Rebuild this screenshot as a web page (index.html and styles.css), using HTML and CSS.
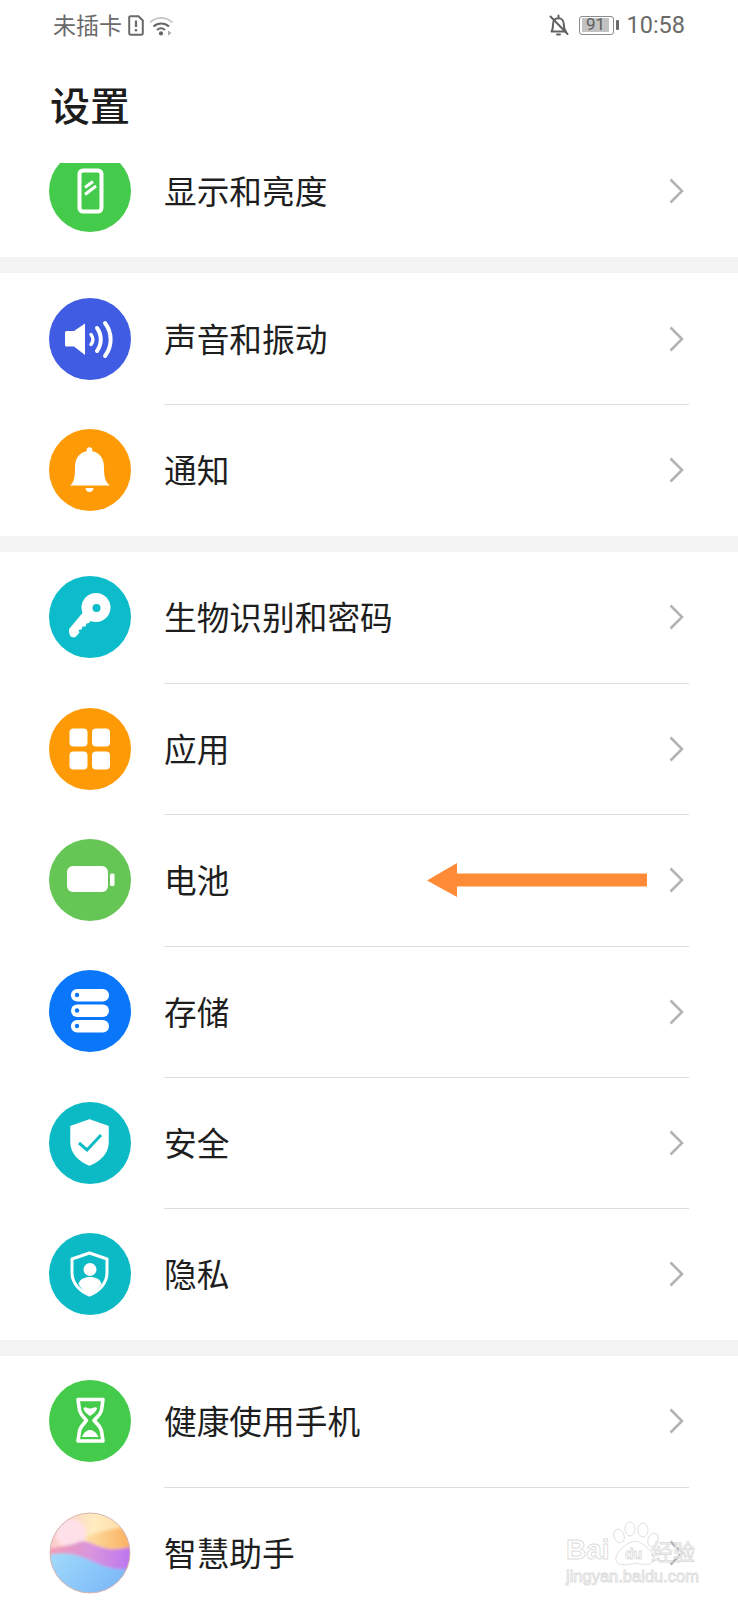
FILE: index.html
```html
<!DOCTYPE html>
<html lang="zh-CN">
<head>
<meta charset="utf-8">
<title>设置</title>
<link rel="stylesheet" href="styles.css">
</head>
<body>
<div class="screen">
  <header class="status">
    <div class="status-group">
      <span class="carrier">未插卡</span>
      <svg class="sim" viewBox="0 0 16 21"><path d="M2.5 1.2H10.5L14.8 5.5V18a1.8 1.8 0 0 1-1.8 1.8H3A1.8 1.8 0 0 1 1.2 18V2.5A1.3 1.3 0 0 1 2.5 1.2Z" fill="none" stroke="#6a6a6a" stroke-width="2"/><path d="M8 5.5V12" stroke="#6a6a6a" stroke-width="2.2"/><circle cx="8" cy="15.2" r="1.3" fill="#6a6a6a"/></svg>
      <svg class="wifi" viewBox="0 0 25 21"><path d="M1 7.5C7 1.5 17 1.5 23.5 7.5" fill="none" stroke="#c9c9c9" stroke-width="1.8"/><path d="M4.5 11.5C9 7.5 15.5 7.5 20 11.5" fill="none" stroke="#666" stroke-width="2"/><path d="M8 15C10.5 12.8 13.5 12.8 16 15" fill="none" stroke="#666" stroke-width="2"/><circle cx="12" cy="18.4" r="2.1" fill="#666"/><path d="M19 15.5l3.5 2.5-3.5 2.5Z" fill="#aaa"/></svg>
    </div>
    <div class="status-group">
      <svg class="bell-off" viewBox="0 0 21 22"><path d="M3.5 17.5C5 15.5 5 13.5 5 10.5C5 6.5 7.2 4.2 10.5 4.2C13.6 4.2 15.8 6.5 15.8 10.2C15.8 13.5 16 15.5 17.8 17.5Z" fill="none" stroke="#626262" stroke-width="2" stroke-linejoin="round"/><path d="M10.5 1.5V4M9 20.5H12M2.5 2.5L19.5 20" stroke="#626262" stroke-width="2" stroke-linecap="round"/></svg>
      <div class="battery"><span class="battery-level">91</span></div>
      <span class="battery-tip"></span>
      <span class="time">10:58</span>
    </div>
  </header>

  <h1 class="title">设置</h1>

  <main class="list">
    <section class="group group-first">
      <div class="row">
        <span class="badge green">
          <svg viewBox="0 0 82 82"><rect x="30.500" y="20.500" width="22" height="41" rx="3.500" fill="none" stroke="#fff" stroke-width="4"/><path d="M36 37.500L44 31.500M36 44.500L47 36" stroke="#fff" stroke-width="3" fill="none"/></svg>
        </span>
        <div class="row-body"><span class="label">显示和亮度</span><svg class="chevron" viewBox="0 0 15 26"><path d="M1.5 1.5L13 13L1.5 24.5" /></svg></div>
      </div>
    </section>

    <section class="group">
      <div class="row">
        <span class="badge indigo">
          <svg viewBox="0 0 82 82"><path d="M17.500 33H25L36 25.500V57L25 48.500H17.500A1.500 1.500 0 0 1 16 47V34.500A1.500 1.500 0 0 1 17.500 33Z" fill="#fff"/><path d="M42 36.500C44.500 39.500 44.500 43.500 42 46.500" stroke="#fff" stroke-width="3.500" fill="none" stroke-linecap="round"/><path d="M48 30C53 37 53 46 48 53" stroke="#fff" stroke-width="4" fill="none" stroke-linecap="round"/><path d="M56 25C63.500 35 63.500 48 56 58" stroke="#fff" stroke-width="4" fill="none" stroke-linecap="round"/></svg>
        </span>
        <div class="row-body"><span class="label">声音和振动</span><svg class="chevron" viewBox="0 0 15 26"><path d="M1.5 1.5L13 13L1.5 24.5" /></svg></div>
      </div>
      <div class="row">
        <span class="badge orange">
          <svg viewBox="0 0 82 82"><circle cx="40.500" cy="21" r="2.800" fill="#fff"/><path d="M21 56.500C25 53 26 49 26 38C26 28 32 22 40.500 22C49 22 55 28 55 38C55 49 56.500 53 61 56.500Z" fill="#fff"/><path d="M36.500 59H44.500C44 62 42.500 63 40.500 63C38.500 63 37 62 36.500 59Z" fill="#fff"/></svg>
        </span>
        <div class="row-body"><span class="label">通知</span><svg class="chevron" viewBox="0 0 15 26"><path d="M1.5 1.5L13 13L1.5 24.5" /></svg></div>
      </div>
    </section>

    <section class="group">
      <div class="row">
        <span class="badge teal">
          <svg viewBox="0 0 82 82"><circle cx="47" cy="31.500" r="14.500" fill="#fff"/><path d="M36 34L20.500 52.500C19.500 54 20 57.500 21 59.500C22.500 61.500 25.500 62 27 60.500L30.500 56.500L29.500 54L32.500 53.500L33.500 50.500L36.500 50.500L37.500 47.500L40 47L44 42Z" fill="#fff"/><circle cx="47.500" cy="32" r="4" fill="#0cbccb"/></svg>
        </span>
        <div class="row-body"><span class="label">生物识别和密码</span><svg class="chevron" viewBox="0 0 15 26"><path d="M1.5 1.5L13 13L1.5 24.5" /></svg></div>
      </div>
      <div class="row">
        <span class="badge orange">
          <svg viewBox="0 0 82 82"><rect x="20.500" y="20.500" width="18" height="18" rx="4" fill="#fff"/><rect x="43" y="20.500" width="18" height="18" rx="4" fill="#fff"/><rect x="20.500" y="43.500" width="18" height="18" rx="4" fill="#fff"/><rect x="43" y="43.500" width="18" height="18" rx="4" fill="#fff"/></svg>
        </span>
        <div class="row-body"><span class="label">应用</span><svg class="chevron" viewBox="0 0 15 26"><path d="M1.5 1.5L13 13L1.5 24.5" /></svg></div>
      </div>
      <div class="row">
        <span class="badge leaf">
          <svg viewBox="0 0 82 82"><rect x="18" y="27" width="41" height="26" rx="6" fill="#fff"/><rect x="61" y="34.500" width="4.500" height="12.500" rx="1.500" fill="#fff"/></svg>
        </span>
        <div class="row-body"><span class="label">电池</span><svg class="chevron" viewBox="0 0 15 26"><path d="M1.5 1.5L13 13L1.5 24.5" /></svg></div>
      </div>
      <div class="row">
        <span class="badge blue">
          <svg viewBox="0 0 82 82"><rect x="22" y="19" width="38" height="12.500" rx="6.200" fill="#fff"/><rect x="22" y="34.500" width="38" height="12.500" rx="6.200" fill="#fff"/><rect x="22" y="50" width="38" height="12.500" rx="6.200" fill="#fff"/><circle cx="28" cy="25" r="2.200" fill="#0a77fb"/><circle cx="28" cy="40.500" r="2.200" fill="#0a77fb"/><circle cx="28" cy="56" r="2.200" fill="#0a77fb"/></svg>
        </span>
        <div class="row-body"><span class="label">存储</span><svg class="chevron" viewBox="0 0 15 26"><path d="M1.5 1.5L13 13L1.5 24.5" /></svg></div>
      </div>
      <div class="row">
        <span class="badge cyan">
          <svg viewBox="0 0 82 82"><path d="M40.500 18L59 24.500V40C59 51 51 59 40.500 63C30 59 22 51 22 40V24.500Z" fill="#fff" stroke="#fff" stroke-width="1.500" stroke-linejoin="round"/><path d="M30 41L38 48L52 33" fill="none" stroke="#0bbac4" stroke-width="3"/></svg>
        </span>
        <div class="row-body"><span class="label">安全</span><svg class="chevron" viewBox="0 0 15 26"><path d="M1.5 1.5L13 13L1.5 24.5" /></svg></div>
      </div>
      <div class="row">
        <span class="badge cyan">
          <svg viewBox="0 0 82 82"><path d="M40.500 20L58 26V40C58 50 50.500 58 40.500 62C30.500 58 23 50 23 40V26Z" fill="none" stroke="#fff" stroke-width="3" stroke-linejoin="round"/><circle cx="41" cy="36.500" r="6.500" fill="#fff"/><path d="M29.500 51C31 46 35 44 41 44C47 44 51 46 52.500 51C49 56 45 59.500 40.500 61.500C36 59.500 32.500 56 29.500 51Z" fill="#fff"/></svg>
        </span>
        <div class="row-body"><span class="label">隐私</span><svg class="chevron" viewBox="0 0 15 26"><path d="M1.5 1.5L13 13L1.5 24.5" /></svg></div>
      </div>
    </section>

    <section class="group">
      <div class="row">
        <span class="badge green">
          <svg viewBox="0 0 82 82"><path d="M29 19.500H54L52.500 30C51.500 35 47 38 45 40.500C47 43 51.500 46 52.500 51L54 61H29L30.500 51C31.500 46 35.500 43 37.500 40.500C35.500 38 31.500 35 30.500 30Z" fill="none" stroke="#fff" stroke-width="3.600" stroke-linejoin="round"/><path d="M34.500 28C37 26 39 29 41 28.500C43 29 46 26 48 28C48 31 44 34 41 36C38 34 34.500 31 34.500 28Z" fill="#fff"/><path d="M33 57C35 52 38 50 41 50C44 50 47 52 49.500 57Z" fill="#fff"/></svg>
        </span>
        <div class="row-body"><span class="label">健康使用手机</span><svg class="chevron" viewBox="0 0 15 26"><path d="M1.5 1.5L13 13L1.5 24.5" /></svg></div>
      </div>
      <div class="row">
        <span class="badge orb">
          <svg viewBox="0 0 82 82">
            <defs>
              <clipPath id="orb-clip"><circle cx="41" cy="41" r="40"/></clipPath>
              <linearGradient id="orb-base" x1="0" y1="0" x2="1" y2="0.2"><stop offset="0" stop-color="#fbc4d0"/><stop offset="0.55" stop-color="#ffecc0"/><stop offset="1" stop-color="#fdd9a0"/></linearGradient>
              <linearGradient id="orb-mid" x1="0" y1="0" x2="1" y2="0"><stop offset="0" stop-color="#f59cae"/><stop offset="0.5" stop-color="#d894de"/><stop offset="1" stop-color="#b76ff2"/></linearGradient>
              <linearGradient id="orb-low" x1="0" y1="0" x2="1" y2="0.5"><stop offset="0" stop-color="#a3dcfa"/><stop offset="1" stop-color="#77b5f8"/></linearGradient>
              <linearGradient id="orb-sun" x1="0" y1="0" x2="1" y2="0"><stop offset="0" stop-color="#fde0a8"/><stop offset="1" stop-color="#fba851"/></linearGradient>
              <filter id="orb-soft"><feGaussianBlur stdDeviation="1.500"/></filter>
            </defs>
            <g clip-path="url(#orb-clip)">
              <rect width="82" height="82" fill="url(#orb-base)"/>
              <g filter="url(#orb-soft)">
                <path d="M35 25C45 22 70 14 90 14V36C75 40 45 40 35 25Z" fill="url(#orb-sun)"/>
                <circle cx="22" cy="22" r="15" fill="#fde0e8"/>
                <path d="M-4 38C10 34 22 34 30 30C40 27 45 35 60 37C70 38 80 36 90 32V60H-4Z" fill="url(#orb-mid)"/>
                <path d="M-4 44C15 38 30 43 45 50C60 57 75 60 90 54V90H-4Z" fill="url(#orb-low)"/>
              </g>
            </g>
            <circle cx="41" cy="41" r="40" fill="none" stroke="#d8b4b0" stroke-width="1"/>
          </svg>
        </span>
        <div class="row-body"><span class="label">智慧助手</span><svg class="chevron" viewBox="0 0 15 26"><path d="M1.5 1.5L13 13L1.5 24.500" /></svg></div>
      </div>
    </section>
  </main>

  <svg class="arrow" viewBox="0 0 222 36"><path d="M0 17.500L30 0V10.500H220V23.500H30V34Z" fill="#ff8b36"/></svg>

  <svg class="watermark" viewBox="0 0 150 80">
    <g fill="#fff" stroke="#dcdcdc" stroke-width="0.900">
      <text class="wm-brand" x="2" y="44">Bai</text>
      <ellipse cx="55" cy="21" rx="5" ry="7" transform="rotate(-20 55 21)"/>
      <ellipse cx="66" cy="14" rx="5" ry="7"/>
      <ellipse cx="79" cy="15" rx="5" ry="7"/>
      <ellipse cx="89" cy="25" rx="5" ry="7" transform="rotate(20 89 25)"/>
      <path d="M72 26C80 28 90 38 90 43C90 51 80 50 72 48C62 51 50 51 52 42C54 35 63 27 72 26Z"/>
      <text class="wm-du" x="61" y="44">du</text>
      <text class="wm-jy" x="87" y="45">经验</text>
      <text class="wm-url" x="2" y="67">jingyan.baidu.com</text>
    </g>
  </svg>
</div>
</body>
</html>
```
FILE: styles.css
```css
* { box-sizing: border-box; }
html, body { margin: 0; padding: 0; background: #fff; }
body { font-family: "Noto Sans CJK SC", "Noto Sans", sans-serif; }

.screen {
  position: relative;
  width: 738px;
  height: 1600px;
  overflow: hidden;
  background: #fff;
  display: flex;
  flex-direction: column;
}

.status {
  height: 50px;
  flex: none;
  display: flex;
  justify-content: space-between;
  align-items: center;
  padding: 0 53px 0 53px;
  color: #6a6a6a;
}
.status-group { display: flex; align-items: center; }
.carrier { font-size: 23px; line-height: 50px; margin-top: -3px; }
.sim { width: 16px; height: 21px; margin-left: 6px; }
.wifi { width: 25px; height: 21px; margin-left: 5px; }
.bell-off { width: 21px; height: 22px; margin-right: 10px; }
.battery {
  width: 35px;
  height: 19px;
  border: 1.5px solid #8a8a8a;
  border-radius: 3px;
  padding: 1.5px;
  display: flex;
}
.battery-level {
  flex: 1;
  margin-right: 3px;
  background: #c2c2c2;
  color: #5e5e5e;
  font: 17px/13px Roboto, sans-serif;
  text-align: center;
}
.battery-tip {
  width: 3px;
  height: 10px;
  margin: 0 7px 0 2px;
  background: #6a6a6a;
  border-radius: 1px;
}
.time { font: 23.500px/50px Roboto, sans-serif; color: #6a6a6a; }

.title {
  flex: none;
  height: 113px;
  margin: 0;
  padding: 29px 0 0 50px;
  font-size: 40px;
  line-height: 50px;
  font-weight: 500;
  color: #1c1c1c;
}

.list { flex: 1; min-height: 0; overflow: hidden; background: #fff; }
.group { background: #fff; border-bottom: 16px solid #f3f3f3; }
.group:last-child { border-bottom: 0; }
.group-first { margin-top: -37.3px; height: 147.3px; }

.row {
  height: 131.33px;
  display: flex;
  align-items: center;
  padding-left: 49px;
}
.row + .row .row-body { border-top: 1px solid #dedede; }

.badge {
  width: 82px;
  height: 82px;
  flex: none;
  border-radius: 50%;
  margin-right: 33px;
}
.badge svg { display: block; width: 82px; height: 82px; }
.green { background: #45cb4c; }
.indigo { background: #3f5ce2; }
.orange { background: #ff9a07; }
.teal { background: #0cbccb; }
.leaf { background: #65c655; }
.blue { background: #0a77fb; }
.cyan { background: #0bbac4; }
.orb { background: transparent; }

.row-body {
  flex: none;
  width: 525px;
  align-self: stretch;
  display: flex;
  align-items: center;
  justify-content: space-between;
  padding-right: 5px;
}
.label { font-size: 32.700px; color: #1e1e1e; line-height: 44px; margin-bottom: 2px; }
.chevron { width: 15px; height: 26px; }
.chevron path { fill: none; stroke: #b3b3b3; stroke-width: 2.6; }

.arrow {
  position: absolute;
  left: 427px;
  top: 863px;
  width: 222px;
  height: 36px;
}
.watermark {
  position: absolute;
  left: 564px;
  top: 1515px;
  width: 150px;
  height: 80px;
}
.wm-brand { font: bold 28px "Liberation Sans", sans-serif; }
.wm-du { font: bold 14px "Liberation Sans", sans-serif; }
.wm-jy { font: 22px "Noto Sans CJK SC", sans-serif; }
.wm-url { font: 16.500px "Liberation Sans", sans-serif; }
```
